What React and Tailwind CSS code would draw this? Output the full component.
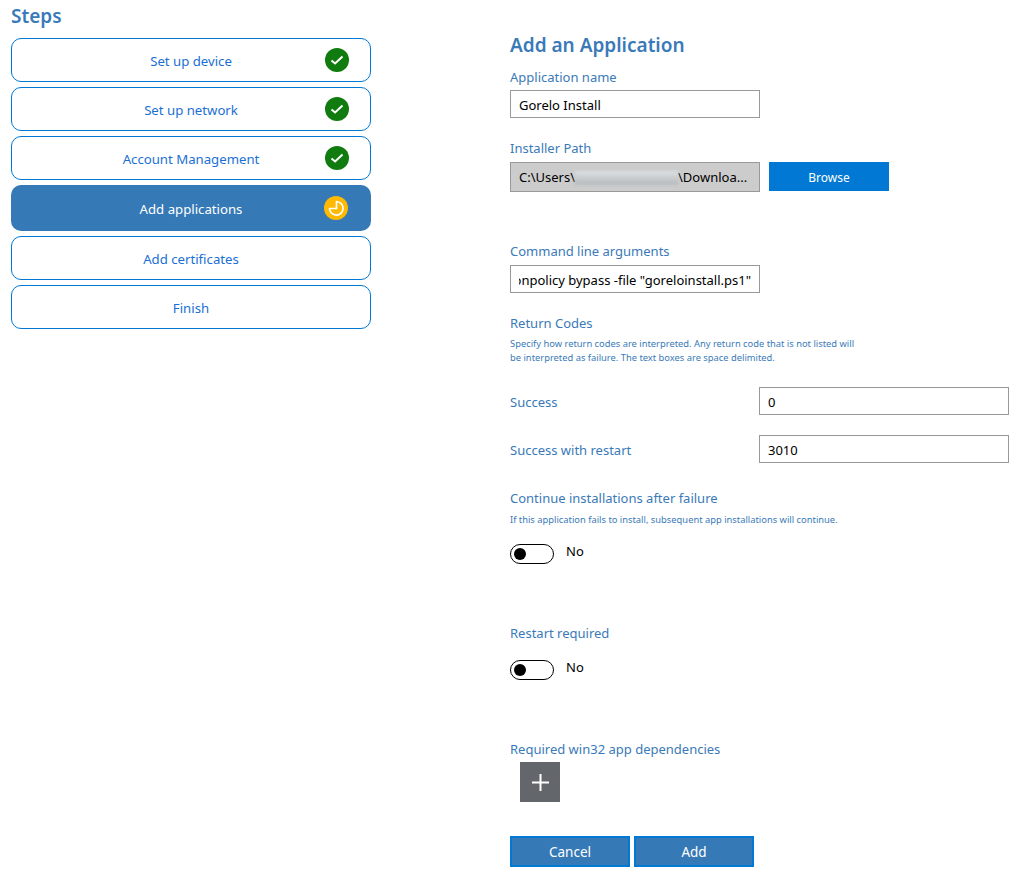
const font = "font-['Noto_Sans',sans-serif]";
const blue = "text-[#3a7ab8]";

function Check() {
  return (
    <svg width="24" height="24" viewBox="0 0 24 24" className="shrink-0">
      <circle cx="12" cy="12" r="12" fill="#107c10" />
      <path d="M6.5 12.5l3.6 3L17.5 8.5" fill="none" stroke="#fff" strokeWidth="2" />
    </svg>
  );
}

function Pending() {
  return (
    <svg width="24" height="24" viewBox="0 0 24 24" className="shrink-0">
      <circle cx="12" cy="12" r="12" fill="#ffb900" />
      <path d="M12.5 5.5a6.8 6.8 0 1 1-7 7h7z" fill="none" stroke="#fff" strokeWidth="1.7" strokeLinejoin="round" />
    </svg>
  );
}

function Step({ label, status, active }) {
  return (
    <div
      className={
        active
          ? "relative flex h-[46px] items-center justify-center rounded-[10px] bg-[#3579b6] pt-[3px] text-[13.2px] text-white"
          : "relative flex h-[44px] items-center justify-center rounded-[10px] border border-[#0078d4] bg-white pt-[3px] text-[13.2px] text-[#1a6fd4]"
      }
    >
      <span>{label}</span>
      {status === "done" && (
        <span className="absolute right-[21px] top-[9px] flex"><Check /></span>
      )}
      {status === "pending" && (
        <span className="absolute right-[23px] top-[11px] flex"><Pending /></span>
      )}
    </div>
  );
}

function Label({ children, className = "" }) {
  return <div className={`text-[13px] leading-[20px] ${blue} ${className}`}>{children}</div>;
}

function Small({ children, className = "" }) {
  return <div className={`text-[9.35px] leading-[14px] ${blue} ${className}`}>{children}</div>;
}

function Field({ value, className = "" }) {
  return (
    <div className={`flex h-[28px] w-[250px] items-center border border-[#999] bg-white px-2 pt-[3px] text-[13px] text-black ${className}`}>
      {value}
    </div>
  );
}

function Toggle() {
  return (
    <div className="flex items-start gap-3">
      <div className="flex h-[20px] w-[44px] items-center rounded-full border border-black bg-white pl-[3px]">
        <span className="h-[12px] w-[12px] rounded-full bg-black" />
      </div>
      <span className="mt-[-3px] text-[13px] leading-[20px] text-black">No</span>
    </div>
  );
}

function ActionButton({ children }) {
  return (
    <button className="flex h-[31px] w-[120px] items-center justify-center border-2 border-[#0078d4] bg-[#3579b6] pt-[2px] text-[13.5px] text-white">
      {children}
    </button>
  );
}

export default function App() {
  return (
    <div className={`${font} flex h-[884px] w-[1027px] overflow-hidden bg-white`}>
      <aside className="ml-[11px] w-[360px] shrink-0 pt-[3px]">
        <h2 className="mb-[8px] text-[19px] font-semibold leading-[27px] text-[#3a7ab8]">Steps</h2>
        <div className="flex flex-col gap-[5px]">
          <Step label="Set up device" status="done" />
          <Step label="Set up network" status="done" />
          <Step label="Account Management" status="done" />
          <Step label="Add applications" status="pending" active />
          <Step label="Add certificates" />
          <Step label="Finish" />
        </div>
      </aside>

      <main className="ml-[139px] w-[499px] shrink-0 pt-[32px]">
        <h1 className="text-[19px] font-semibold leading-[27px] text-[#3a7ab8]">Add an Application</h1>
        <Label className="mt-[8px]">Application name</Label>
        <Field value="Gorelo Install" className="mt-[3px]" />

        <Label className="mt-[20px]">Installer Path</Label>
        <div className="mt-[4px] flex items-start gap-[9px]">
          <div className="flex h-[30px] w-[250px] items-center overflow-hidden whitespace-nowrap border border-[#999] bg-[#cccccc] px-2 pt-[2px] text-[13px] text-black">
            <span>C:\Users\</span>
            <span className="h-[14px] w-[103px] shrink-0 bg-gradient-to-b from-[#dde1e4] to-[#b4b9bc] blur-[1.5px]" />
            <span>\Downloa...</span>
          </div>
          <button className="flex h-[29px] w-[120px] items-center justify-center bg-[#0078d4] pt-[2px] text-[12px] text-white">
            Browse
          </button>
        </div>

        <Label className="mt-[49px]">Command line arguments</Label>
        <div className="mt-[4px] flex h-[28px] w-[250px] items-center border border-[#999] bg-white px-2 pt-[3px] text-[13px] text-black">
          <div className="flex w-full justify-end overflow-hidden whitespace-nowrap">
            <span className="shrink-0">-executionpolicy bypass -file "goreloinstall.ps1"</span>
          </div>
        </div>

        <Label className="mt-[20px]">Return Codes</Label>
        <Small className="mt-[4px] w-[350px]">
          Specify how return codes are interpreted. Any return code that is not listed will be interpreted as failure. The text boxes are space delimited.
        </Small>

        <div className="mt-[22px] flex items-center">
          <Label className="w-[249px] pt-[2px]">Success</Label>
          <Field value="0" />
        </div>
        <div className="mt-[20px] flex items-center">
          <Label className="w-[249px] pt-[2px]">Success with restart</Label>
          <Field value="3010" />
        </div>

        <Label className="mt-[25px]">Continue installations after failure</Label>
        <Small className="mt-[5px]">If this application fails to install, subsequent app installations will continue.</Small>
        <div className="mt-[17px]"><Toggle /></div>

        <Label className="mt-[59px]">Restart required</Label>
        <div className="mt-[17px]"><Toggle /></div>

        <Label className="mt-[59px]">Required win32 app dependencies</Label>
        <div className="ml-[10px] mt-[3px] flex h-[40px] w-[40px] items-center justify-center bg-[#63666a]">
          <svg width="17" height="17" viewBox="0 0 17 17">
            <path d="M8.5 0v17M0 8.5h17" stroke="#fff" strokeWidth="2" />
          </svg>
        </div>

        <div className="mt-[34px] flex gap-[4px]">
          <ActionButton>Cancel</ActionButton>
          <ActionButton>Add</ActionButton>
        </div>
      </main>
    </div>
  );
}
